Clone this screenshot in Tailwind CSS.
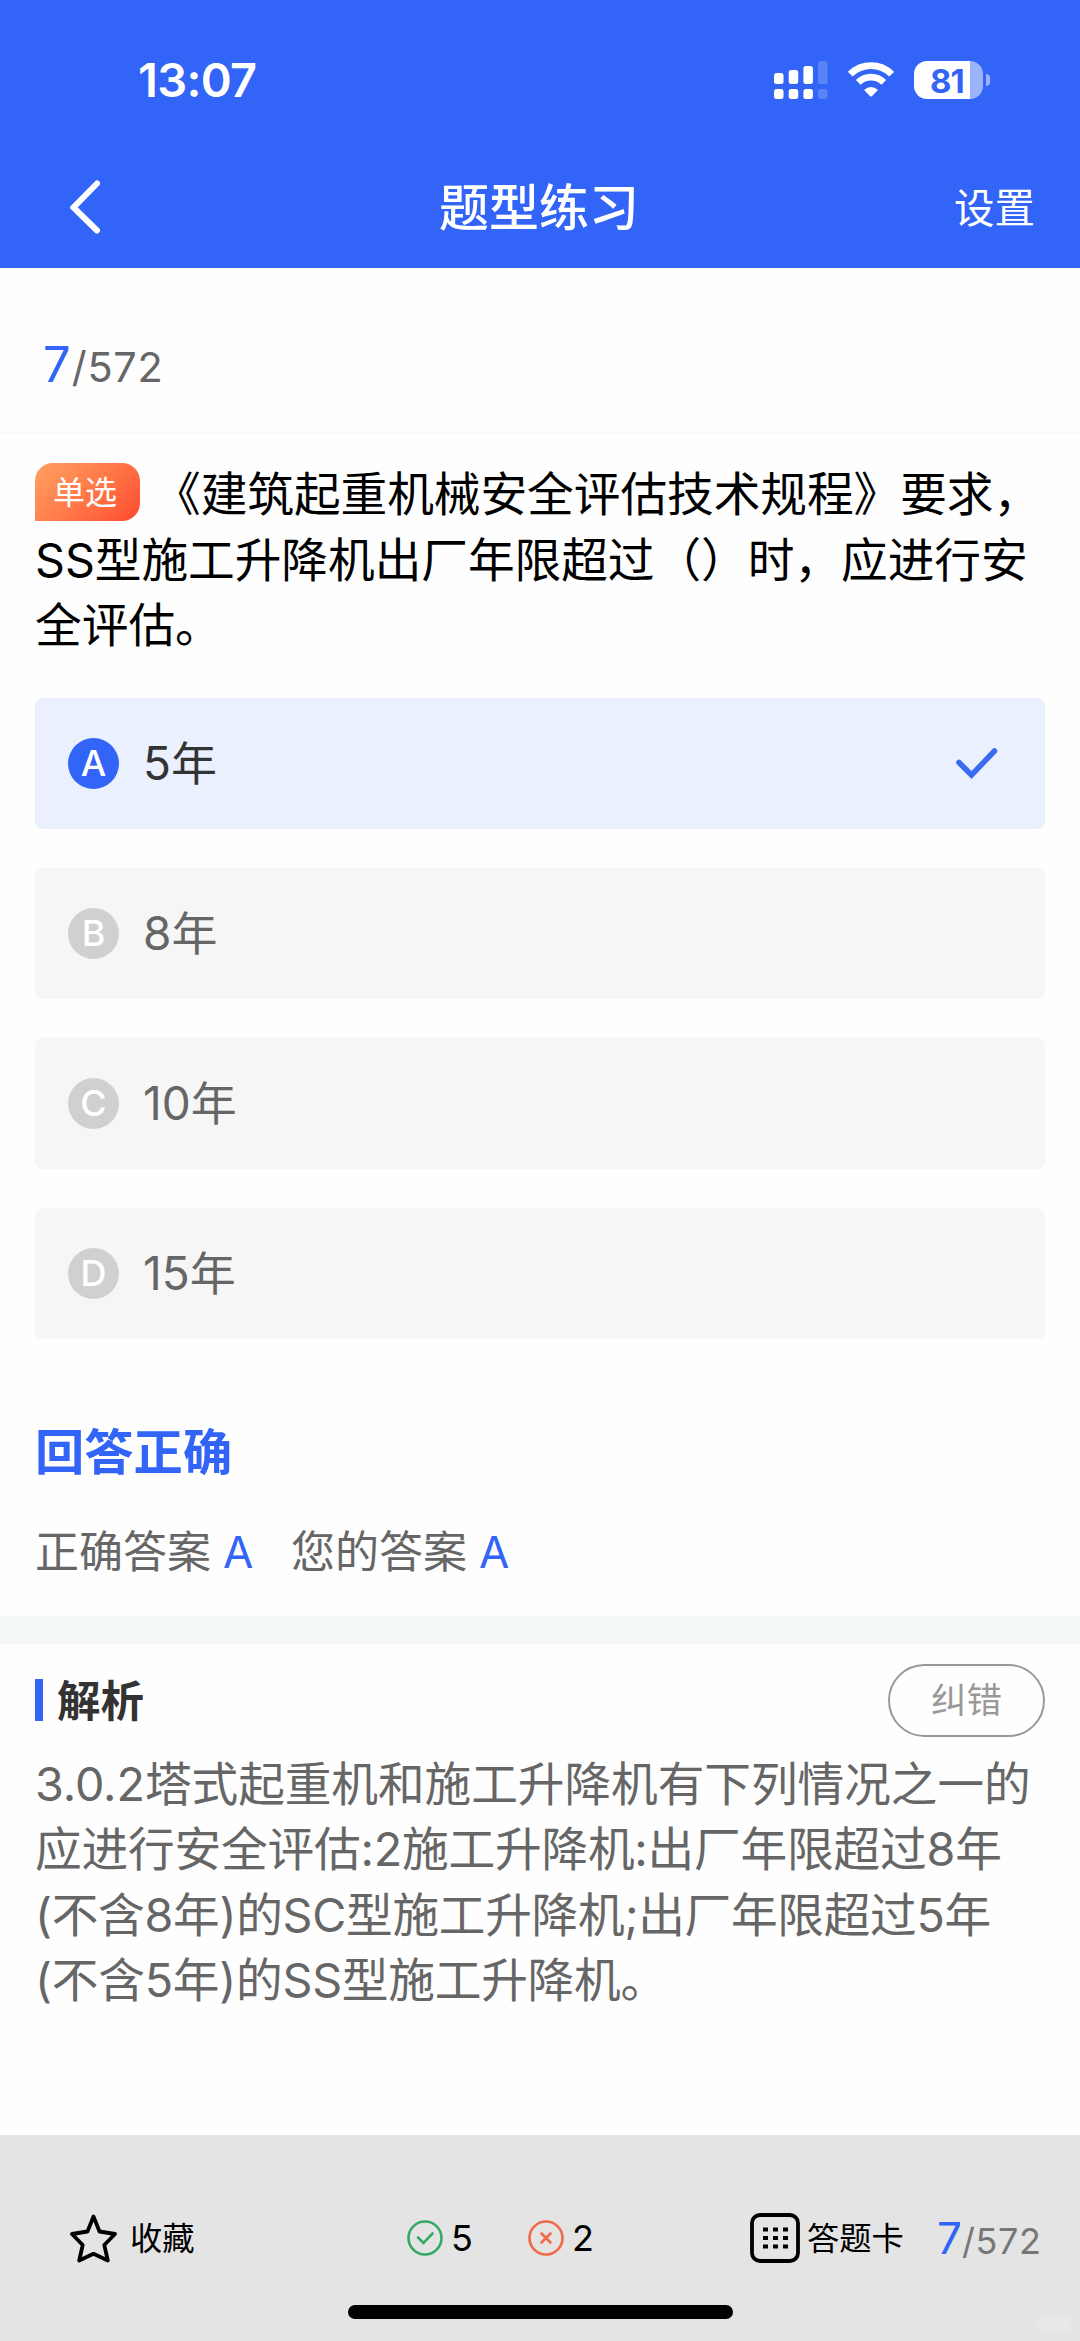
<!DOCTYPE html>
<html lang="zh-CN">
<head>
<meta charset="utf-8">
<title>题型练习</title>
<script src="https://cdn.jsdelivr.net/npm/@tailwindcss/browser@4"></script>
</head>
<body class="bg-[#fefefe]">
<div class="relative flex h-[2341px] w-[1080px] flex-col overflow-hidden bg-[#fefefe] font-[Inter,'Noto_Sans_CJK_SC',sans-serif] whitespace-nowrap text-black">

  <header class="h-[268px] shrink-0 bg-[#3164f7] text-white">
    <div class="flex h-[160px] items-center justify-between pr-[90px] pl-[138px]">
      <span class="pb-[2px] text-[47px] leading-none font-semibold tracking-[-0.7px]">13:07</span>
      <div class="flex items-center">
        <svg class="mr-5" width="54" height="38" viewBox="0 0 54 38" fill="#fff">
          <rect x="0" y="12" width="9.5" height="11" rx="2.5"/><rect x="14.7" y="9" width="9.5" height="14" rx="2.5"/><rect x="29.4" y="5" width="9.5" height="18" rx="2.5"/><rect x="44" y="0" width="9.5" height="23" rx="2.5" opacity=".2"/>
          <rect x="0" y="28" width="9.5" height="10" rx="2.5"/><rect x="14.7" y="28" width="9.5" height="10" rx="2.5"/><rect x="29.4" y="28" width="9.5" height="10" rx="2.5"/><rect x="44" y="28" width="9.5" height="10" rx="2.5" opacity=".2"/>
        </svg>
        <svg class="mr-5" width="46" height="36" viewBox="0 0 46 36" fill="none" stroke="#fff">
          <path d="M2.3 12.2a29.4 29.4 0 0 1 41.4 0" stroke-width="6.8"/>
          <path d="M10.2 20.300a18.3 18.3 0 0 1 25.6 0" stroke-width="6.6"/>
          <path d="M16 28.100q7-6 14 0l-5.900 6q-1.100 1-2.200 0z" fill="#fff" stroke="none"/>
        </svg>
        <div class="flex items-center gap-[3px]">
          <div class="flex h-[38px] w-[69px] items-center justify-center rounded-[13px] bg-[linear-gradient(90deg,#fff_81%,#9bb3fb_81%)] pt-[2px] pr-[3px] text-[33px] leading-none font-bold tracking-tight text-[#3164f7]">81</div>
          <div class="h-[12px] w-[4px] rounded-r-full bg-[#9bb3fb]"></div>
        </div>
      </div>
    </div>
    <div class="flex h-[96px] items-center justify-between pr-[46px] pl-[70px]">
      <svg width="54" height="56" viewBox="0 0 54 56" fill="none" stroke="#fff" stroke-width="6" stroke-linecap="round"><path d="M27 3.500 3.500 27.500 27 50.500"/></svg>
      <h1 class="text-[50px] leading-none font-medium">题型练习</h1>
      <span class="w-[80px] pt-[2px] text-[40.5px] leading-none">设置</span>
    </div>
  </header>

  <div class="h-[166px] shrink-0 border-b-2 border-[#f8f8f8] pt-[69px] pl-[43px] leading-[56px] text-[#666]"><span class="text-[49px] text-[#3164f7]">7</span><span class="ml-px text-[41.5px] tracking-[0.7px]">/572</span></div>

  <section class="h-[264px] shrink-0 pt-[28px] pl-[35px] text-[46.7px] leading-[65.5px]">
    <div class="flex">
      <span class="mt-px flex h-[58px] w-[105px] items-center justify-center rounded-[18px] rounded-bl-none bg-linear-135 from-[#ffa060] to-[#ff4830] pt-[2px] pr-[5px] text-[32px] leading-none text-white">单选</span>
      <span class="ml-[14px] tracking-[-0.05px]">《建筑起重机械安全评估技术规程》要求，</span>
    </div>
    <p class="tracking-[-0.05px]">SS型施工升降机出厂年限超过（）时，应进行安</p>
    <p>全评估。</p>
  </section>

  <ul class="flex flex-col gap-[39.5px] px-[35px] text-[46px] leading-none text-[#666]">
    <li class="flex h-[130.5px] items-center rounded-lg bg-[#eaf0fe] pr-[47px] pl-[33px] text-[#333]">
      <span class="mr-[24px] flex size-[51px] items-center justify-center rounded-full bg-[#3164f7] text-[36px] font-medium text-white">A</span>
      <span>5年</span>
      <svg class="ml-auto" width="43" height="32" viewBox="0 0 43 32" fill="none" stroke="#3b6bf0" stroke-width="5.5" stroke-linecap="round"><path d="M4 15.5 16.5 28 39.5 4"/></svg>
    </li>
    <li class="flex h-[130.5px] items-center rounded-lg bg-[#f6f6f6] pl-[33px]">
      <span class="mr-[24px] flex size-[51px] items-center justify-center rounded-full bg-[#d1d0d1] text-[36px] font-medium text-white">B</span>
      <span>8年</span>
    </li>
    <li class="flex h-[130.5px] items-center rounded-lg bg-[#f6f6f6] pl-[33px]">
      <span class="mr-[24px] flex size-[51px] items-center justify-center rounded-full bg-[#d1d0d1] text-[36px] font-medium text-white">C</span>
      <span>10年</span>
    </li>
    <li class="flex h-[130.5px] items-center rounded-lg bg-[#f6f6f6] pl-[33px]">
      <span class="mr-[24px] flex size-[51px] items-center justify-center rounded-full bg-[#d1d0d1] text-[36px] font-medium text-white">D</span>
      <span>15年</span>
    </li>
  </ul>

  <section class="h-[277px] shrink-0 pt-[78px] pl-[35px]">
    <h2 class="text-[49.3px] leading-[70px] font-bold text-[#3164f7]">回答正确</h2>
    <div class="mt-[35px] flex text-[44px] leading-[60px] text-[#666]">
      <span>正确答案</span><span class="ml-[12px] w-[68px] text-[#3164f7]">A</span>
      <span>您的答案</span><span class="ml-[12px] text-[#3164f7]">A</span>
    </div>
  </section>

  <div class="h-[28px] shrink-0 bg-[#f3f7f8]"></div>

  <section class="grow px-[35px] pt-[20px]">
    <div class="flex h-[73px] items-center">
      <span class="h-[42px] w-[8px] bg-[#3164f7]"></span>
      <h3 class="ml-[14px] pt-[3px] text-[43.5px] leading-none font-bold text-[#333]">解析</h3>
      <button class="ml-auto flex h-[73px] w-[157px] items-center justify-center rounded-full border-[2.5px] border-[#999] pt-px text-[35.5px] leading-none text-[#999]">纠错</button>
    </div>
    <div class="mt-[15px] text-[46.7px] leading-[65.6px] text-[#666]">
      <p class="tracking-[-0.07px]">3.0.2塔式起重机和施工升降机有下列情况之一的</p>
      <p class="tracking-[-0.2px]">应进行安全评估:2施工升降机:出厂年限超过8年</p>
      <p class="tracking-[-0.3px]">(不含8年)的SC型施工升降机;出厂年限超过5年</p>
      <p class="tracking-[-0.25px]">(不含5年)的SS型施工升降机。</p>
    </div>
  </section>

  <footer class="relative h-[206px] shrink-0 bg-[#e4e4e4] pt-[75px]">
    <div class="flex h-[56px] items-center pl-[70px] text-[32.3px] leading-none">
      <svg width="47" height="49" viewBox="0 0 47 49" fill="none" stroke="#000" stroke-width="3.8" stroke-linejoin="round"><path d="M23.500 2.500 29.500 17.500 45 20 34.300 31 37.800 46.500 23.500 39.800 9.200 46.500 12.700 31 2 20 17.500 17.500z"/></svg>
      <span class="ml-[13px] w-[277px] pt-[2px]">收藏</span>
      <svg width="36" height="36" viewBox="0 0 36 36" fill="none" stroke="#36a964" stroke-width="2.6" stroke-linecap="round"><circle cx="18" cy="18" r="16.5"/><path d="m11 17.5 5.5 5.5 9-9.5"/></svg>
      <span class="ml-[8px] w-[77px] text-[36px]">5</span>
      <svg width="36" height="36" viewBox="0 0 36 36" fill="none" stroke="#f2694a" stroke-width="2.6" stroke-linecap="round"><circle cx="18" cy="18" r="16.5"/><path d="m13.5 13.5 9 9m0-9-9 9"/></svg>
      <span class="ml-[8px] w-[178px] text-[36px]">2</span>
      <svg width="50" height="50" viewBox="0 0 50 50"><rect x="2" y="2" width="46" height="46" rx="8" fill="none" stroke="#000" stroke-width="3.8"/><path d="M13 16.5h5m5 0h5m5 0h5M13 25h5m5 0h5m5 0h5M13 33.500h5m5 0h5m5 0h5" stroke="#000" stroke-width="4.2"/></svg>
      <span class="ml-[7px] w-[130px] pt-[2px]">答题卡</span>
      <span class="text-[#777]"><span class="text-[44px] text-[#3164f7]">7</span><span class="text-[36px] tracking-[0.6px]">/572</span></span>
    </div>
    <div class="absolute top-[170px] left-[348px] h-[14px] w-[385px] rounded-full bg-black"></div>
    <div class="absolute top-[180px] left-[1036px] h-[18px] w-[36px] rounded-full bg-white/20 blur-[3px]"></div>
  </footer>
</div>
</body>
</html>
